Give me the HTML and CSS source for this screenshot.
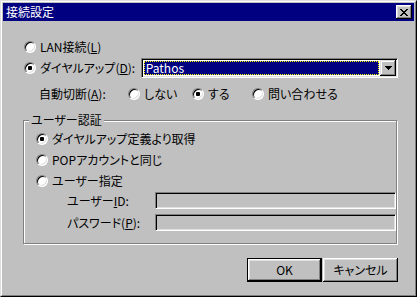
FILE: index.html
```html
<!DOCTYPE html>
<html lang="ja">
<head>
<meta charset="utf-8">
<title>接続設定</title>
<link rel="stylesheet" href="styles.css">
</head>
<body>
<div class="window">
  <div class="frame">
    <div class="titlebar">
      <span class="title">接続設定</span>
      <span class="close"><svg width="8" height="7" viewBox="0 0 8 7"><path d="M0 0h2v1h-2zM6 0h2v1h-2zM1 1h2v1h-2zM5 1h2v1h-2zM2 2h4v1h-4zM3 3h2v1h-2zM2 4h4v1h-4zM1 5h2v1h-2zM5 5h2v1h-2zM0 6h2v1h-2zM6 6h2v1h-2z" fill="#000"/></svg></span>
    </div>
    <div class="content">
      <div class="row r-lan">
        <label class="opt w-main"><span class="radio"></span><span>LAN接続(<u>L</u>)</span></label>
      </div>
      <div class="row r-dial">
        <label class="opt w-main"><span class="radio on"></span><span>ダイヤルアップ(<u>D</u>):</span></label>
        <div class="combo">
          <div class="combo-field"><span class="sel">Pathos</span></div>
          <span class="combo-btn"><svg width="7" height="4" viewBox="0 0 7 4"><path d="M0 0H7V1H6V2H5V3H4V4H3V3H2V2H1V1H0Z" fill="#000"/></svg></span>
        </div>
      </div>
      <div class="row r-auto">
        <span class="lbl-auto">自動切断(<u>A</u>):</span>
        <label class="opt w-no"><span class="radio"></span><span>しない</span></label>
        <label class="opt w-yes"><span class="radio on"></span><span>する</span></label>
        <label class="opt"><span class="radio"></span><span>問い合わせる</span></label>
      </div>
      <div class="group">
        <span class="group-title">ユーザー認証</span>
        <div class="grow"><label class="opt"><span class="radio on"></span><span>ダイヤルアップ定義より取得</span></label></div>
        <div class="grow"><label class="opt"><span class="radio"></span><span>POPアカウントと同じ</span></label></div>
        <div class="grow"><label class="opt"><span class="radio"></span><span>ユーザー指定</span></label></div>
        <div class="frow f-id"><span class="flabel">ユーザー<u>I</u>D:</span><span class="edit"></span></div>
        <div class="frow f-pw"><span class="flabel">パスワード(<u>P</u>):</span><span class="edit"></span></div>
      </div>
      <div class="buttons">
        <div class="btn default"><span>OK</span></div>
        <div class="btn"><span>キャンセル</span></div>
      </div>
    </div>
  </div>
</div>
</body>
</html>
```
FILE: styles.css
```css
html, body {
  margin: 0;
  padding: 0;
  background: #c0c0c0;
}
body {
  font-family: "Noto Sans CJK JP", "Liberation Sans", sans-serif;
  font-size: 12px;
  line-height: 14px;
  color: #000;
  font-feature-settings: "palt";
}
u {
  text-decoration: underline;
  text-underline-offset: 1px;
}
.window {
  width: 417px;
  height: 297px;
  box-sizing: border-box;
  border: 1px solid;
  border-color: #dfdfdf #000 #000 #dfdfdf;
  background: #c0c0c0;
}
.frame {
  height: 100%;
  box-sizing: border-box;
  border: 1px solid;
  border-color: #fff #808080 #808080 #fff;
  padding: 1px;
}
.titlebar {
  height: 18px;
  background: #000080;
  color: #fff;
  display: flex;
  align-items: center;
  padding: 0 2px 0 3px;
}
.title {
  flex: 1;
  white-space: nowrap;
}
.close {
  width: 16px;
  height: 14px;
  box-sizing: border-box;
  background: #c0c0c0;
  box-shadow: inset -1px -1px #000, inset 1px 1px #fff, inset -2px -2px #808080, inset 2px 2px #dfdfdf;
  display: flex;
  align-items: center;
  justify-content: center;
  padding-right: 1px;
}
.close svg, .combo-btn svg {
  display: block;
  shape-rendering: crispEdges;
}
.content {
  padding: 16px 16px 0 21px;
}
.row {
  display: flex;
  align-items: center;
  height: 20px;
  white-space: nowrap;
}
.r-dial { margin-top: 1px; }
.r-auto { margin-top: 6px; }
.opt {
  display: flex;
  align-items: center;
  white-space: nowrap;
}
.w-main { width: 118px; }
.w-no { width: 64px; }
.w-yes { width: 60px; }
.lbl-auto {
  margin-left: 15px;
  width: 89px;
}
.radio {
  position: relative;
  width: 12px;
  height: 12px;
  box-sizing: border-box;
  border-radius: 50%;
  background: #fff;
  border: 1px solid;
  border-color: #808080 #fff #fff #808080;
  box-shadow: inset 1px 1px #000, inset -1px -1px #dfdfdf;
  margin-right: 4px;
  flex: none;
}
.radio.on::after {
  content: "";
  position: absolute;
  left: 3px;
  top: 3px;
  width: 4px;
  height: 4px;
  border-radius: 1px;
  background: #000;
}
.combo {
  width: 260px;
  height: 20px;
  box-sizing: border-box;
  border: 1px solid;
  border-color: #808080 #fff #fff #808080;
  box-shadow: inset 1px 1px #000, inset -1px -1px #dfdfdf;
  padding: 1px;
  background: #fff;
  display: flex;
}
.combo-field {
  flex: 1;
  padding: 1px;
  display: flex;
}
.sel {
  flex: 1;
  background: #000080;
  color: #fff;
  border: 1px dotted #ffff00;
  padding-left: 1px;
  line-height: 12px;
  display: flex;
  align-items: center;
}
.combo-btn {
  width: 16px;
  height: 16px;
  box-sizing: border-box;
  background: #c0c0c0;
  box-shadow: inset -1px -1px #000, inset 1px 1px #dfdfdf, inset -2px -2px #808080, inset 2px 2px #fff;
  display: flex;
  align-items: center;
  justify-content: center;
}
.group {
  position: relative;
  width: 374px;
  height: 124px;
  box-sizing: border-box;
  margin: 16px 0 0 -1px;
  border: 1px solid #808080;
  box-shadow: inset 1px 1px #fff, 1px 1px #fff;
  padding: 8px 0 0 12px;
}
.group-title {
  position: absolute;
  top: -8px;
  left: 5px;
  padding: 0 2px;
  background: #c0c0c0;
  white-space: nowrap;
}
.grow {
  display: flex;
  align-items: center;
  height: 20px;
  margin-bottom: 1px;
}
.frow {
  display: flex;
  align-items: center;
  height: 17px;
}
.f-id { margin-top: 1px; }
.f-pw { margin-top: 5px; }
.flabel {
  margin-left: 31px;
  width: 88px;
  white-space: nowrap;
}
.edit {
  width: 241px;
  height: 17px;
  box-sizing: border-box;
  border: 1px solid;
  border-color: #808080 #fff #fff #808080;
  box-shadow: inset 1px 1px #000, inset -1px -1px #dfdfdf;
  background: #c0c0c0;
}
.buttons {
  display: flex;
  justify-content: flex-end;
  gap: 1px;
  margin-top: 14px;
}
.btn {
  width: 75px;
  height: 24px;
  box-sizing: border-box;
  background: #c0c0c0;
  box-shadow: inset -1px -1px #000, inset 1px 1px #fff, inset -2px -2px #808080, inset 2px 2px #dfdfdf;
  display: flex;
  align-items: center;
  justify-content: center;
  white-space: nowrap;
}
.btn.default {
  border: 1px solid #000;
  box-shadow: inset -1px -1px #000, inset 1px 1px #fff, inset -2px -2px #808080, inset 2px 2px #dfdfdf;
}
```
